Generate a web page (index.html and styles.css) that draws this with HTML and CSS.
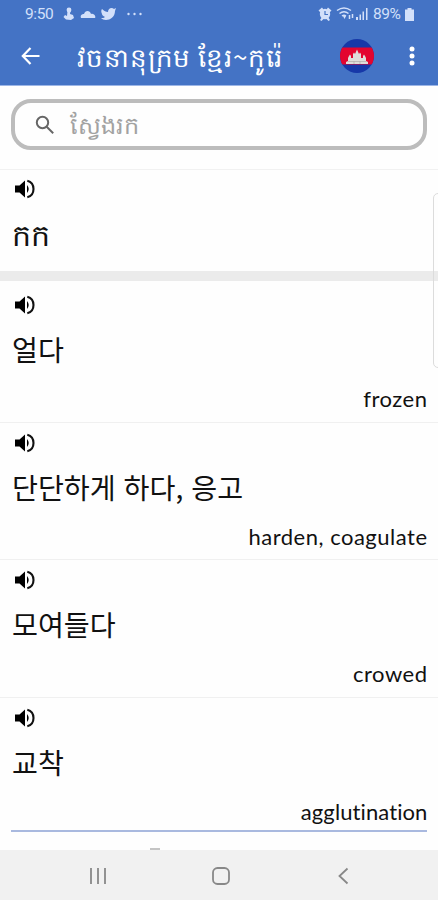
FILE: index.html
```html
<!DOCTYPE html>
<html lang="km">

<head>
  <meta charset="UTF-8">
  <meta name="viewport" content="width=device-width, initial-scale=1">
  <title>វចនានុក្រម ខ្មែរ~កូរ៉េ</title>
  <link rel="stylesheet" href="styles.css">
</head>

<body>
  <svg class="sprite" width="0" height="0">
    <symbol id="speaker" viewBox="0 0 20 20">
      <path d="M0 6.500h4.500L10 1.500v17l-5.500-5H0z" />
      <path d="M12 6q3.400 4 0 8z" />
      <path d="M12.300 1.700c3.800 1 6.200 4.300 6.200 8.300s-2.400 7.300-6.200 8.300" fill="none" stroke="currentColor" stroke-width="2.100" />
    </symbol>
  </svg>

  <header class="header">
    <div class="status">
      <span class="clock">9:50</span>
      <svg class="status-left" width="84" height="16" viewBox="0 0 84 16">
        <circle cx="7" cy="4" r="2.400" />
        <path d="M5.500 5h3l-.5 3 3 1 1 3-3 2-5-.500L1.500 11 3 9l2 1z" />
        <path d="M19 12c-1-3 1-4 3-4 1-4 6-4 7 0 4-1 5 4 4 4z" />
        <path d="M40 3c2 2 4 3 6 3 0-4 4-5 6-3l2-1-1 3c0 6-5 9-9 9-2 0-4-1-5-2 2 0 3 0 4-1-2-1-3-2-3-3-1-2-1-4 0-5z" />
        <circle cx="66.500" cy="8" r="1.200" />
        <circle cx="72.500" cy="8" r="1.200" />
        <circle cx="78.500" cy="8" r="1.200" />
      </svg>
      <svg class="status-right" width="52" height="16" viewBox="0 0 52 16">
        <circle cx="7" cy="8" r="5.200" />
        <path d="M.5 4.500L4 1.500l1.500 2-3 3zM13.500 4.500L10 1.500l-1.500 2 3 3zM2 14l2-3 2 1.500L3.500 15zM12 14l-2-3-2 1.500 2.500 2.500z" />
        <path class="cut" d="M7 5v3.500h3" />
        <path class="line" d="M19 4.500q7-5 14 0M21.500 7.500q4.500-3.500 9 0M24 10q2-1.500 4 0M31.500 9v4M34.500 8v4" />
        <path d="M25 10h3l-1.500 3zM38 11h2v3h-2zM41.500 8.500h1.500V14h-1.500zM44.500 5.500H46V14h-1.500zM48 2h1.500v12H48z" />
      </svg>
      <span class="percent">89%</span>
      <svg class="battery" width="9" height="13" viewBox="0 0 9 13">
        <path d="M2.500 0h4v1.500H9V13H0V1.500h2.500z" />
      </svg>
    </div>
    <div class="appbar">
      <svg class="back" width="20" height="20" viewBox="0 0 20 20">
        <path d="M18.500 10H2M9.500 2L1.800 10l7.700 8" />
      </svg>
      <h1 class="title">វចនានុក្រម ខ្មែរ~កូរ៉េ</h1>
      <svg class="flag" width="34" height="34" viewBox="0 0 34 34">
        <clipPath id="round">
          <circle cx="17" cy="17" r="17" />
        </clipPath>
        <g clip-path="url(#round)">
          <path fill="#1738a8" d="M0 0h34v34H0z" />
          <path fill="#e3052f" d="M0 8.500h34v17H0z" />
          <path fill="#dfddda" d="M6 25v-2l2-1v-3l1-2 1-1.500 1 1.500v2h2v-4l1-1.500 1 1.500 2-4.500 2 4.500 1-1.500 1 1.500v4h2v-2l1-1.500 1 1.500 1 2v3l2 1v2z" />
          <path stroke="#aaa29f" stroke-width=".6" fill="none" d="M8 22.500h18M14 22.500V25M20 22.500V25" />
        </g>
      </svg>
      <svg class="more" width="6" height="20" viewBox="0 0 6 20">
        <circle cx="3" cy="3" r="2.500" />
        <circle cx="3" cy="10" r="2.500" />
        <circle cx="3" cy="17" r="2.500" />
      </svg>
    </div>
  </header>

  <div class="search-wrap">
    <label class="search">
      <svg class="search-icon" width="20" height="20" viewBox="0 0 20 20">
        <circle cx="7.500" cy="7.500" r="5.700" />
        <path d="M11.700 11.700l6.500 6.500" />
      </svg>
      <span class="placeholder">ស្វែងរក</span>
    </label>
  </div>

  <main class="list">
    <section class="entry headword">
      <svg class="speaker"><use href="#speaker" /></svg>
      <p class="word khmer">កក</p>
    </section>
    <section class="entry">
      <svg class="speaker"><use href="#speaker" /></svg>
      <p class="word" lang="ko">얼다</p>
      <p class="meaning" lang="en">frozen</p>
    </section>
    <section class="entry">
      <svg class="speaker"><use href="#speaker" /></svg>
      <p class="word" lang="ko">단단하게 하다, 응고</p>
      <p class="meaning" lang="en">harden, coagulate</p>
    </section>
    <section class="entry">
      <svg class="speaker"><use href="#speaker" /></svg>
      <p class="word" lang="ko">모여들다</p>
      <p class="meaning" lang="en">crowed</p>
    </section>
    <section class="entry last">
      <svg class="speaker"><use href="#speaker" /></svg>
      <p class="word" lang="ko">교착</p>
      <p class="meaning" lang="en">agglutination</p>
    </section>
    <div class="peek"></div>
    <div class="scroll-thumb"></div>
  </main>

  <nav class="navbar">
    <svg width="18" height="18" viewBox="0 0 18 18">
      <path d="M2 1v16M9 1v16M16 1v16" />
    </svg>
    <svg width="18" height="18" viewBox="0 0 18 18">
      <rect x="1" y="1" width="16" height="16" rx="4.500" />
    </svg>
    <svg width="18" height="18" viewBox="0 0 18 18">
      <path d="M13.500 1.500L5.500 9l8 7.500" />
    </svg>
  </nav>
</body>

</html>
```
FILE: styles.css
```css
* {
  box-sizing: border-box;
}

body {
  display: flex;
  flex-direction: column;
  height: 900px;
  margin: 0;
  overflow: hidden;
  background: #fefefe;
  color: #111;
  font-family: "Noto Sans CJK KR", "Noto Sans", sans-serif;
}

svg {
  display: block;
  flex: none;
}

.sprite {
  position: absolute;
}

.header {
  height: 86px;
  flex: none;
  background: #4473c5;
  border-bottom: 1px solid #9db6e6;
  color: #fff;
}

.status {
  display: flex;
  align-items: center;
  height: 28px;
  padding: 0 24px 0 25px;
  color: #d3e0fa;
  fill: #d3e0fa;
  font: 15.5px/28px Roboto, sans-serif;
}

.clock {
  width: 37px;
  letter-spacing: -0.4px;
}

.status-right {
  margin-left: auto;
}

.status-right .line {
  fill: none;
  stroke: #d3e0fa;
  stroke-width: 1.5;
}

.status-right .cut {
  fill: none;
  stroke: #4473c5;
  stroke-width: 1.2;
}

.percent {
  width: 28px;
  margin: 0 4px 0 3px;
  font-size: 15.5px;
  letter-spacing: -0.4px;
}

.appbar {
  display: flex;
  align-items: center;
  height: 56px;
  padding: 0 23px 0 21px;
}

.back {
  fill: none;
  stroke: #fff;
  stroke-width: 2.2;
}

.title {
  width: 207px;
  margin: 0 0 0 36px;
  font-size: 26px;
  font-weight: 400;
  line-height: 54px;
  letter-spacing: 0.9px;
  white-space: nowrap;
}

.flag {
  margin-left: auto;
}

.more {
  margin-left: 35px;
  fill: #fff;
}

.search-wrap {
  flex: none;
  height: 84px;
  padding: 13px 11px 0;
  border-bottom: 1px solid #f1f1f1;
}

.search {
  display: flex;
  align-items: center;
  height: 51px;
  padding-left: 20px;
  border: 4px solid #bcbcbc;
  border-radius: 20px;
}

.search-icon {
  fill: none;
  stroke: #666;
  stroke-width: 2;
}

.placeholder {
  margin: -1px 0 0 15px;
  color: #a2a2a2;
  font-size: 24px;
  line-height: 40px;
}

.list {
  position: relative;
  flex: 1;
  overflow: hidden;
}

.entry {
  height: 137.5px;
  padding: 10px 11px 0 12px;
  border-bottom: 1px solid #f0f0f0;
}

.headword {
  height: 111px;
  padding-top: 9px;
  border-bottom: 10px solid #ebebeb;
  margin-bottom: 4px;
}

.speaker {
  width: 20px;
  height: 20px;
  margin-left: 3px;
}

.word {
  height: 34px;
  margin: 17px 0 0;
  font-size: 28.2px;
  line-height: 34px;
  white-space: nowrap;
}

.khmer {
  font-size: 30px;
}

.meaning {
  height: 30px;
  margin: 18px -0.5px 0 0;
  font: 22px/30px Lato, sans-serif;
  letter-spacing: 0.5px;
  text-align: right;
}

.last {
  margin: 0 11px;
  height: 134px;
  padding: 10px 0 0 1px;
  border-bottom: 2px solid #a9b9df;
}

.last .meaning {
  letter-spacing: 0.1px;
}

/* top edge of the next row's handle */
.peek {
  width: 10px;
  height: 2px;
  margin: 16px 0 0 150px;
  background: #c4c4c4;
}

.scroll-thumb {
  position: absolute;
  top: 23px;
  right: -6px;
  width: 11px;
  height: 175px;
  border: 1px solid #dcdcdc;
  border-radius: 5px;
}

.navbar {
  display: flex;
  flex: none;
  justify-content: space-between;
  height: 50px;
  padding: 17px 86px 0 89px;
  background: #f1f1f1;
}

.navbar svg {
  fill: none;
  stroke: #888;
  stroke-width: 1.8;
}
```
